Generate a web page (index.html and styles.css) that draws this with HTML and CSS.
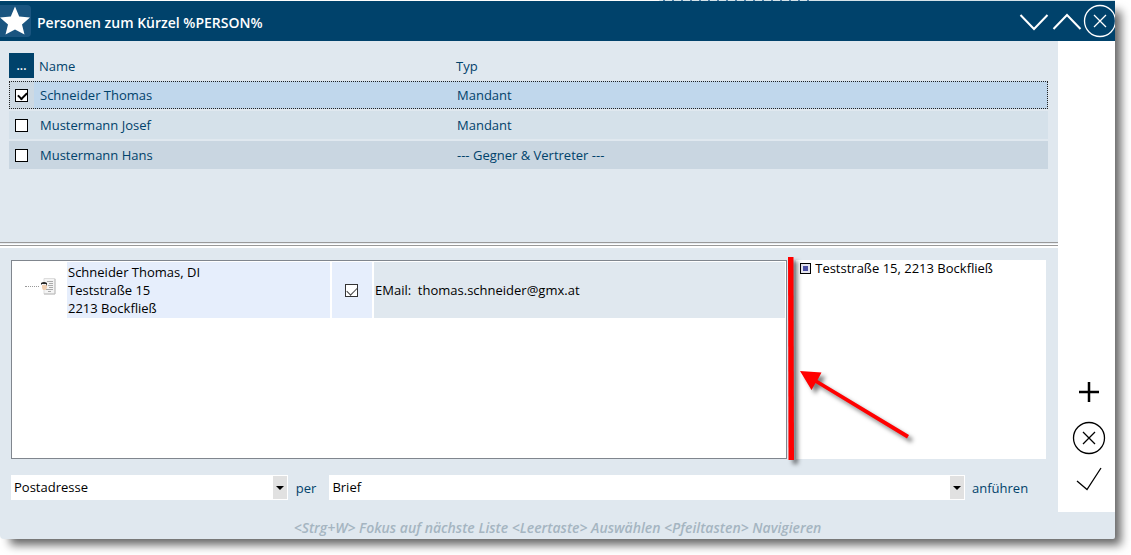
FILE: index.html
```
<!DOCTYPE html>
<html lang="de">
<head>
<meta charset="utf-8">
<title>Personen zum Kürzel %PERSON%</title>
<link rel="stylesheet" href="styles.css">
</head>
<body>
<div class="backdrop"><span class="backdrop-page"></span><span class="backdrop-text"></span><span class="backdrop-rest"></span></div>
<div class="window">
  <header class="titlebar">
    <span class="app-icon"><svg viewBox="0 0 31 32" width="31" height="32" aria-hidden="true"><path d="M15 1.500L19.200 11.500L30 12.500L22 19.500L24.500 29.500L15 24.500L5.500 29.500L8 19.500L0 12.500L10.800 11.500Z" fill="#fff"/></svg></span>
    <h1 class="title">Personen zum Kürzel %PERSON%</h1>
    <button class="icon-button" aria-label="Nach unten"><svg width="33" height="34" viewBox="0 0 33 34"><path d="M3.500 11L17 25L30.500 11" /></svg></button>
    <button class="icon-button" aria-label="Nach oben"><svg width="33" height="34" viewBox="0 0 33 34"><path d="M3.500 25L17 11L30.500 25" /></svg></button>
    <button class="icon-button" aria-label="Schließen"><svg class="thin" width="32" height="34" viewBox="0 0 32 34"><circle cx="17" cy="17" r="15.500"/><path d="M11 11L23 23M23 11L11 23"/></svg></button>
  </header>
  <div class="body">
    <main class="content">
      <section class="persons">
        <table class="person-table">
          <thead>
            <tr><th class="col-check"><button class="more">...</button></th><th class="col-name">Name</th><th>Typ</th></tr>
          </thead>
          <tbody>
            <tr class="row selected"><td class="check-cell"><input class="check" type="checkbox" checked aria-label="Schneider Thomas"></td><td>Schneider Thomas</td><td>Mandant</td></tr>
            <tr class="row"><td class="check-cell"><input class="check" type="checkbox" aria-label="Mustermann Josef"></td><td>Mustermann Josef</td><td>Mandant</td></tr>
            <tr class="row alternate"><td class="check-cell"><input class="check" type="checkbox" aria-label="Mustermann Hans"></td><td>Mustermann Hans</td><td>--- Gegner &amp; Vertreter ---</td></tr>
          </tbody>
        </table>
      </section>
      <div class="splitter"></div>
      <section class="details">
        <div class="panes">
          <div class="contact-pane">
            <div class="contact">
              <div class="tree-node">
                <span class="branch"></span>
                <svg width="15" height="17" viewBox="0 0 15 17" aria-hidden="true"><path d="M3 .5H14V16H3Z" fill="#f4f4f4" stroke="#ddd"/><path d="M14 1V16H3" fill="none" stroke="#bbb"/><path d="M6 3.500H12M8 5.500H12M7 7.500H12M8 9.500H12M5 11.500H12M7 13.500H10" stroke="#aaa"/><path d="M1 7H6V10L4.500 12H2L1 10Z" fill="#f0cfb2"/><path d="M0 7V5Q3 3 6 5V8L5 6H1Z" fill="#252525"/></svg>
              </div>
              <address class="address">Schneider Thomas, DI<br>Teststraße 15<br>2213 Bockfließ</address>
              <div class="use-cell"><input class="check soft" type="checkbox" id="mail" checked></div>
              <label class="mail" for="mail">EMail:&nbsp; thomas.schneider@gmx.at</label>
            </div>
          </div>
          <div class="divider">
            <svg class="marker" width="136" height="214" viewBox="0 0 136 214" aria-hidden="true"><g fill="#f00"><path d="M1 3L6.500 3L7 206H1.500Z"/><path d="M13 117L34.500 118.500L30.500 126L122 181L120 184.500L28.500 129L24.500 136Z"/></g></svg>
          </div>
          <div class="address-pane">
            <label class="option"><input class="state" type="checkbox" checked>Teststraße 15, 2213 Bockfließ</label>
          </div>
        </div>
        <form class="delivery">
          <span class="drop drop-address"><select class="select" aria-label="Adressart"><option>Postadresse</option></select></span>
          <label class="per" for="channel">per</label>
          <span class="drop drop-channel"><select class="select" id="channel"><option>Brief</option></select></span>
          <span class="suffix">anführen</span>
        </form>
      </section>
    </main>
    <aside class="tools">
      <button class="icon-button dark" aria-label="Hinzufügen"><svg class="thick" width="34" height="34" viewBox="0 0 34 34"><path d="M17 7V27M7 17H27"/></svg></button>
      <button class="icon-button dark" aria-label="Abbrechen"><svg class="thin" width="34" height="34" viewBox="0 0 34 34"><circle cx="17" cy="17" r="15.500"/><path d="M11 11L23 23M23 11L11 23"/></svg></button>
      <button class="icon-button dark" aria-label="Bestätigen"><svg class="thin" width="34" height="34" viewBox="0 0 34 34"><path d="M5 20L15 28.500L29 7"/></svg></button>
    </aside>
  </div>
  <footer class="status">&lt;Strg+W&gt; Fokus auf nächste Liste &lt;Leertaste&gt; Auswählen &lt;Pfeiltasten&gt; Navigieren</footer>
</div>
</body>
</html>
```
FILE: styles.css
```
* { box-sizing: border-box; }

body {
  margin: 0;
  min-height: 100vh;
  padding: 0 16px 16px 0;
  display: flex;
  flex-direction: column;
  overflow: hidden;
  background: #fff;
  color: #00426b;
  font: 13px/18px "Open Sans", sans-serif;
}

button, input, select { font: inherit; color: inherit; margin: 0; }
button { padding: 0; border: 0; background: none; }

/* Strip of the page lying behind the window */
.backdrop { display: flex; height: 1px; }
.backdrop-page { flex: 13; background: #fff; }
.backdrop-text { flex: 3; background: repeating-linear-gradient(90deg, #d6e4ea 0 4px, #4e7fa8 4px 6px, #d6e4ea 6px 9px); }
.backdrop-rest { flex: 6; background: #d6e4ea; }

.window {
  flex: 1;
  display: flex;
  flex-direction: column;
  background: #e0e8ef;
  border-radius: 0 0 2px 4px;
  box-shadow: 8px 8px 10px -2px rgba(0, 0, 0, .6);
}

.titlebar { display: flex; align-items: center; height: 40px; background: #00426b; }
.app-icon { width: 31px; height: 32px; border-radius: 0 4px 4px 0; background: #1a5580; }
.title { flex: 1; margin: 4px 0 0 6px; color: #fff; font-size: 14px; line-height: 18px; font-weight: 600; }

.icon-button { display: block; color: #fff; }
.icon-button.dark { color: #000; }
.icon-button svg { display: block; fill: none; stroke: currentColor; stroke-width: 2; }
.icon-button .thin { stroke-width: 1.3; }
.icon-button .thick { stroke-width: 2.5; }

.body { flex: 1; display: flex; }
.content { flex: 1; display: flex; flex-direction: column; }

.persons { height: 201px; padding: 10px 10px 0 9px; }
.person-table { width: 100%; table-layout: fixed; border-collapse: separate; border-spacing: 0 2px; }
.person-table th { height: 26px; padding: 0 0 0 5px; text-align: left; font-weight: 400; }
.person-table td { height: 28px; padding: 0 0 0 6px; }
.person-table .col-check { width: 25px; padding: 0; vertical-align: top; }
.person-table .col-name { width: 417px; }
.more { display: block; width: 25px; height: 25px; background: #00426b; color: #fff; font-size: 12px; font-weight: 600; }
.row { background: #d5e1ea; }
.alternate { background: #c9d6e1; }
.selected { background: #c0d7ec; outline: 1px dotted #222; outline-offset: -1px; }
.selected .check-cell { background: #cdd9e3; }

.check {
  appearance: none;
  display: block;
  width: 13px;
  height: 13px;
  border: 1px solid #000;
  background: #fff;
}
.check:checked::before {
  content: "";
  display: block;
  width: 7px;
  height: 4px;
  margin: 2px 0 0 2px;
  border: solid #000;
  border-width: 0 0 2px 2px;
  transform: rotate(-45deg);
}
.check.soft { border-color: #333; }
.check.soft:checked::before { width: 9px; height: 5px; margin-left: 1px; border-color: #444; border-width: 0 0 1px 1px; }

.splitter { height: 6px; background: linear-gradient(#999 0 1px, #e8edf2 1px 2px, #fff 2px 3px, #999 3px 4px, #fff 4px 6px); }

.details { flex: 1; display: flex; flex-direction: column; padding: 12px 12px 12px 11px; }
.panes { flex: 1; display: flex; color: #000; }
.contact-pane { flex: 776; border: 1px solid #80868e; background: #fff; padding: 1px; }
.contact { display: flex; gap: 2px; height: 56px; }
.tree-node { width: 52px; display: flex; align-items: center; padding: 0 0 8px 12px; gap: 2px; }
.branch { width: 14px; border-top: 1px dotted #999; }
.address { width: 263px; padding: 1px; background: #e6eefc; font-style: normal; }
.use-cell { width: 40px; display: flex; align-items: center; padding-left: 13px; background: #e6eefc; }
.mail { flex: 1; display: flex; align-items: center; padding-left: 1px; background: #e0e8ef; }

.divider { width: 9px; position: relative; }
.marker { position: absolute; left: 0; top: -6px; overflow: visible; z-index: 1; filter: drop-shadow(4px 4px 2px rgba(0, 0, 0, .5)); }
.address-pane { flex: 251; background: #fff; }
.option { display: flex; align-items: center; gap: 4px; padding-left: 4px; line-height: 16px; }
.state {
  appearance: none;
  width: 11px;
  height: 11px;
  border: 1px solid #000;
  background: #4b4fa3;
  box-shadow: inset 0 0 0 2px #e4e4ee;
}

.delivery { display: flex; margin-top: 16px; }
.drop { position: relative; display: flex; height: 25px; background: #fff; color: #000; }
.drop-address { flex: 277; }
.drop-channel { flex: 636; }
.select { appearance: none; flex: 1; border: 0; padding: 0 16px 2px 3px; background: transparent; border-radius: 0; }
.drop::before { content: ""; position: absolute; right: 1px; top: 1px; bottom: 1px; width: 14px; background: #e1e1e1; pointer-events: none; }
.drop::after { content: ""; position: absolute; right: 4px; top: 11px; border: 4px solid transparent; border-top-color: #000; border-bottom: 0; pointer-events: none; }
.per { padding: 4px 13px 0 8px; }
.suffix { width: 81px; padding: 4px 0 0 7px; }

.tools { width: 57px; display: flex; flex-direction: column; justify-content: flex-end; align-items: center; gap: 12px; padding: 0 0 17px 5px; background: #fff; }
.tools .icon-button:last-child { margin-top: -6px; }

.status { height: 27px; padding-top: 7px; text-align: center; color: #a5b5c1; font-size: 14px; font-style: italic; font-weight: 600; }
```
